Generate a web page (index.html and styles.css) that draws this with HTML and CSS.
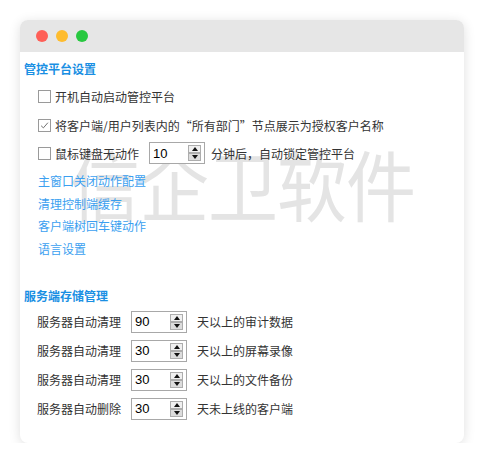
FILE: index.html
```html
<!DOCTYPE html>
<html lang="zh-CN">
<head>
<meta charset="utf-8">
<link rel="stylesheet" href="styles.css">
</head>
<body>
<div class="window">
  <div class="titlebar">
    <span class="dot red"></span><span class="dot yellow"></span><span class="dot green"></span>
  </div>
  <div class="content">
    <div class="watermark">信企卫软件</div>
    <div class="section-title">管控平台设置</div>
    <div class="options">
      <div class="row r1"><span class="cb"></span><span>开机自动启动管控平台</span></div>
      <div class="row r2"><span class="cb checked"><svg viewBox="0 0 13 13" width="11" height="11"><path d="M2.5 6.8 L5.2 9.3 L10.5 3.2" fill="none" stroke="#666" stroke-width="1.1"/></svg></span><span>将客户端/用户列表内的“所有部门”节点展示为授权客户名称</span></div>
      <div class="row r3"><span class="cb"></span><span class="lbl">鼠标键盘无动作</span>
        <div class="spin"><span class="val">10</span><span class="btns"><span class="b up"></span><span class="b down"></span></span></div>
        <span class="after-a">分钟后，自动锁定管控平台</span></div>
      <div class="links">
        <a class="link">主窗口关闭动作配置</a>
        <a class="link">清理控制端缓存</a>
        <a class="link">客户端树回车键动作</a>
        <a class="link">语言设置</a>
      </div>
    </div>
    <div class="section-title s2">服务端存储管理</div>
    <div class="storage">
      <div class="srow"><span class="slbl">服务器自动清理</span><div class="spin"><span class="val">90</span><span class="btns"><span class="b up"></span><span class="b down"></span></span></div><span>天以上的审计数据</span></div>
      <div class="srow"><span class="slbl">服务器自动清理</span><div class="spin"><span class="val">30</span><span class="btns"><span class="b up"></span><span class="b down"></span></span></div><span>天以上的屏幕录像</span></div>
      <div class="srow"><span class="slbl">服务器自动清理</span><div class="spin"><span class="val">30</span><span class="btns"><span class="b up"></span><span class="b down"></span></span></div><span>天以上的文件备份</span></div>
      <div class="srow"><span class="slbl">服务器自动删除</span><div class="spin"><span class="val">30</span><span class="btns"><span class="b up"></span><span class="b down"></span></span></div><span>天未上线的客户端</span></div>
    </div>
  </div>
</div>
</body>
</html>
```
FILE: styles.css
```css
* { box-sizing: border-box; }
html, body { margin: 0; padding: 0; background: #ffffff; }
body {
  font-family: "Noto Sans CJK SC", "Noto Sans", sans-serif;
  font-size: 12px;
  color: #333333;
}
.window {
  margin: 20px 0 0 20px;
  width: 444px;
  height: 423px;
  border-radius: 8px;
  background: #ffffff;
  box-shadow: 0 2px 12px rgba(0,0,0,0.13);
  overflow: hidden;
}
.titlebar {
  height: 32px;
  background: #e6e6e6;
  display: flex;
  align-items: center;
  padding-left: 16px;
  gap: 8px;
}
.dot { width: 12px; height: 12px; border-radius: 50%; display: block; }
.red { background: #fe5f57; }
.yellow { background: #febc2e; }
.green { background: #28c840; }
.content {
  position: relative;
  padding: 9px 0 0 4px;
}
.watermark {
  position: absolute;
  left: 50px;
  top: 92px;
  font-size: 70px;
  line-height: 70px;
  letter-spacing: -1px;
  color: #e4e4e4;
  white-space: nowrap;
  transform: scaleY(1.1);
  transform-origin: top left;
  z-index: 0;
}
.section-title {
  position: relative;
  z-index: 1;
  color: #1a8fe3;
  font-weight: bold;
  font-size: 12px;
  line-height: 16px;
}
.options { position: relative; z-index: 1; padding-left: 14px; }
.row {
  display: flex;
  align-items: center;
  height: 22px;
}
.r1 { margin-top: 8px; }
.r2 { margin-top: 7px; }
.r3 { margin-top: 5px; height: 24px; }
.cb {
  width: 13px; height: 13px;
  border: 1px solid #9a9a9a;
  background: #fff;
  margin-right: 4px;
  display: flex; align-items: center; justify-content: center;
  flex: none;
}
.cb svg { display: block; }
.lbl { margin-right: 10px; }
.spin {
  width: 56px; height: 22px;
  border: 1px solid #a8a8a8;
  background: #fff;
  display: flex;
  align-items: center;
  justify-content: space-between;
  padding: 0 3px 0 3px;
  flex: none;
}
.val {
  font-family: "Liberation Sans", "Noto Sans", sans-serif;
  font-size: 13px;
  color: #000;
}
.btns { display: flex; flex-direction: column; gap: 0; }
.b {
  width: 13px; height: 8px;
  border: 1px solid #adadad;
  position: relative;
  display: block;
}
.b.up { background: #f0f0f0; }
.b.down { background: #dcdcdc; margin-top: 0; }
.b::after {
  content: "";
  position: absolute;
  left: 3px;
  border-left: 3px solid transparent;
  border-right: 3px solid transparent;
}
.b.up::after { top: 1px; border-bottom: 4px solid #111; }
.b.down::after { top: 1px; border-top: 4px solid #111; }
.after-a { margin-left: 6px; }
.links { margin-top: 5px; display: flex; flex-direction: column; }
.link {
  color: #3b9ff0;
  line-height: 22.7px;
  display: block;
  width: max-content;
}
.s2 { margin-top: 27px; }
.storage { position: relative; z-index: 1; padding-left: 13px; margin-top: 7px; display: flex; flex-direction: column; gap: 7px; }
.srow { display: flex; align-items: center; height: 22px; }
.slbl { margin-right: 10px; }
.srow .spin { margin-right: 10px; }
```
